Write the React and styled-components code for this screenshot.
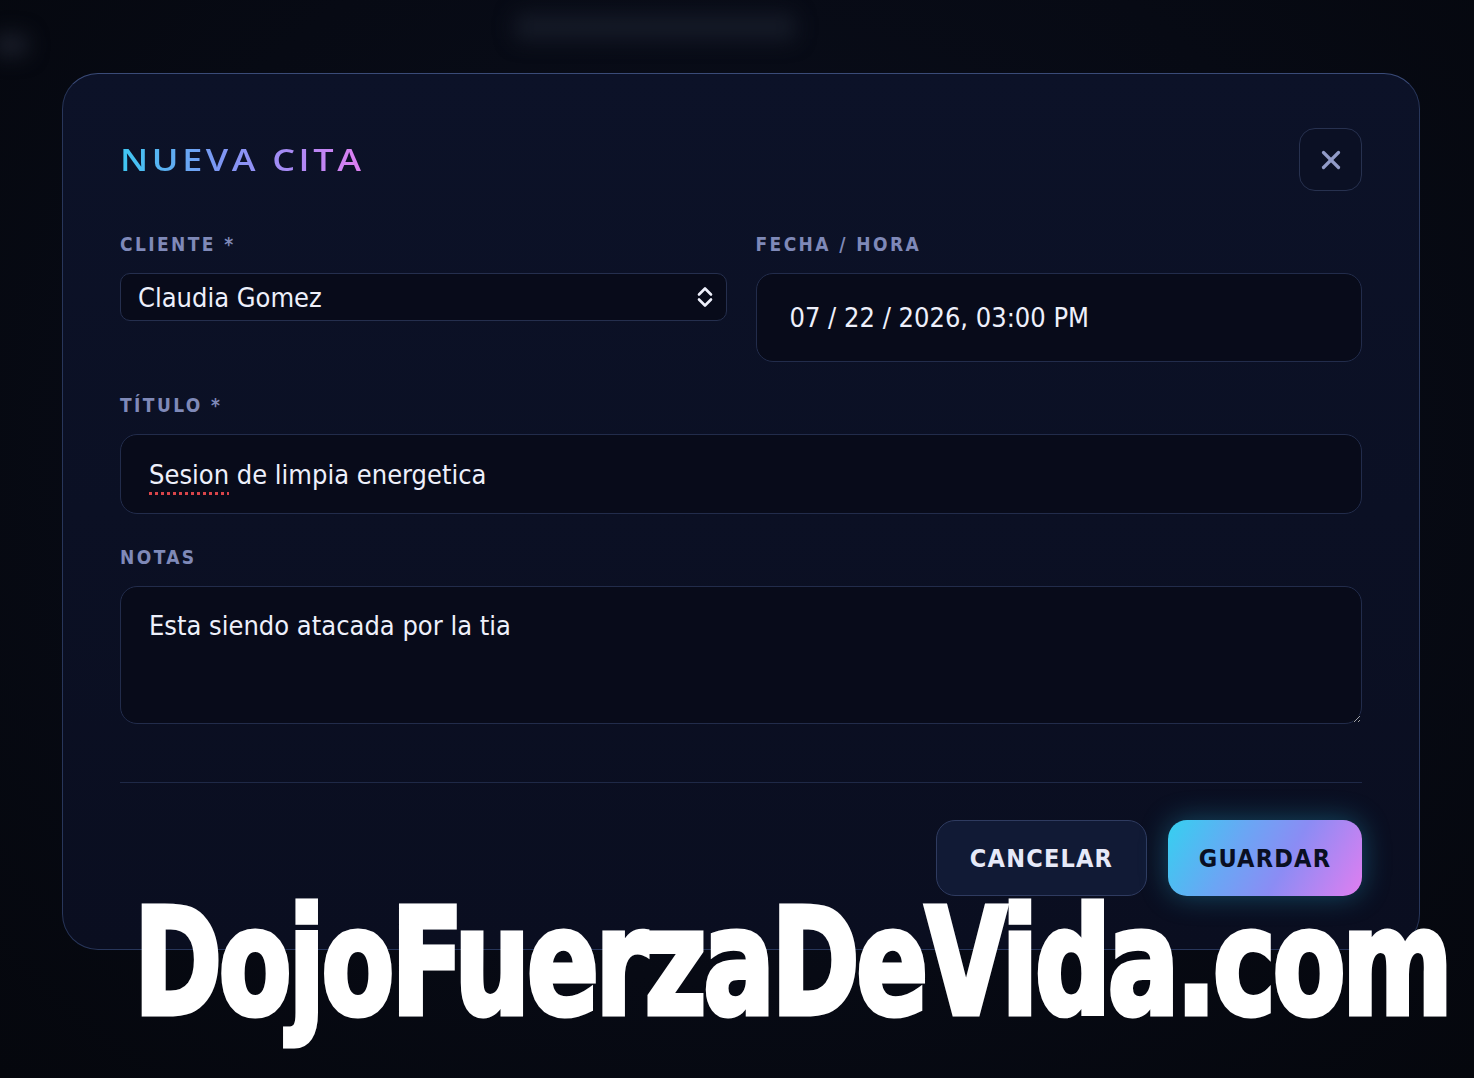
import styled, { createGlobalStyle } from 'styled-components'
import { X } from 'lucide-react'

const GlobalStyle = createGlobalStyle`
    html, body {
        margin: 0;
        padding: 0;
        background: #05070d;
    }
    body {
        font-family: 'DejaVu Sans Condensed', 'DejaVu Sans', sans-serif;
        font-stretch: condensed;
        color: #eef0fb;
    }
`

function UpDownIcon() {
    return (
        <svg width="18" height="26" viewBox="0 0 18 26" fill="none">
            <path
                d="M3 10.5 L9 4.5 L15 10.5"
                stroke="currentColor"
                strokeWidth="2.6"
                strokeLinecap="round"
                strokeLinejoin="round"
            />
            <path
                d="M3 15.5 L9 21.5 L15 15.5"
                stroke="currentColor"
                strokeWidth="2.6"
                strokeLinecap="round"
                strokeLinejoin="round"
            />
        </svg>
    )
}

export default function App() {
    return (
        <Page>
            <GlobalStyle />
            <Backdrop>
                <BlurBlob />
                <BlurTitle />
            </Backdrop>

            <Modal>
                <Header>
                    <Title>NUEVA CITA</Title>
                    <CloseButton aria-label="Cerrar">
                        <X size={30} strokeWidth={2.6} />
                    </CloseButton>
                </Header>

                <Form>
                    <Row>
                        <Field>
                            <Label>CLIENTE *</Label>
                            <SelectBox>
                                <span>Claudia Gomez</span>
                                <UpDownIcon />
                            </SelectBox>
                        </Field>
                        <Field>
                            <Label>FECHA / HORA</Label>
                            <InputBox $height={89}>
                                07 / 22 / 2026, 03:00 PM
                            </InputBox>
                        </Field>
                    </Row>

                    <Field>
                        <Label>TÍTULO *</Label>
                        <InputBox $height={80} $pad={28}>
                            <Misspelled>Sesion</Misspelled>&nbsp;de limpia energetica
                        </InputBox>
                    </Field>

                    <Field>
                        <Label>NOTAS</Label>
                        <NotesArea
                            defaultValue="Esta siendo atacada por la tia"
                            readOnly
                        />
                    </Field>
                </Form>

                <Divider />

                <Footer>
                    <CancelButton>CANCELAR</CancelButton>
                    <SaveButton>GUARDAR</SaveButton>
                </Footer>
            </Modal>

            <Watermark>DojoFuerzaDeVida.com</Watermark>
        </Page>
    )
}

const Page = styled.div`
    position: relative;
    width: 1474px;
    height: 1078px;
    overflow: hidden;
    background: radial-gradient(
            ellipse at 50% 40%,
            #0a0e1c 0%,
            #070a14 60%,
            #05070d 100%
        );
    padding-top: 73px;
    box-sizing: border-box;
`

const Backdrop = styled.div`
    position: absolute;
    inset: 0;
    pointer-events: none;
    filter: blur(10px);
`

const BlurBlob = styled.div`
    position: absolute;
    left: -6px;
    top: 34px;
    width: 34px;
    height: 22px;
    border-radius: 8px;
    background: #1a1e2a;
`

const BlurTitle = styled.div`
    position: absolute;
    left: 515px;
    top: 14px;
    width: 280px;
    height: 26px;
    border-radius: 6px;
    background: #151a27;
`

const Modal = styled.div`
    position: relative;
    width: 1358px;
    margin-left: 62px;
    box-sizing: border-box;
    padding: 54px 57px 53px 57px;
    border-radius: 36px;
    border: 1.5px solid #28365a;
    border-top-color: #3a4b78;
    background: linear-gradient(180deg, #0c1228 0%, #0a0e20 100%);
`

const Header = styled.div`
    display: flex;
    align-items: center;
    justify-content: space-between;
    margin-bottom: 40px;
`

const Title = styled.h2`
    margin: 0;
    font-family: 'Open Sans', 'DejaVu Sans', sans-serif;
    font-stretch: normal;
    font-weight: 600;
    font-size: 30px;
    letter-spacing: 3px;
    background: linear-gradient(90deg, #3ec7f2 0%, #7c97f3 40%, #a98af5 70%, #e07ef0 100%);
    -webkit-background-clip: text;
    background-clip: text;
    color: transparent;
    transform-origin: left center;
    transform: scaleX(1.2);
`

const CloseButton = styled.button`
    width: 63px;
    height: 63px;
    display: flex;
    align-items: center;
    justify-content: center;
    border-radius: 16px;
    border: 1.5px solid #27314f;
    background: #0b1024;
    color: #929bc8;
    padding: 0;
`

const Form = styled.div`
    display: flex;
    flex-direction: column;
    gap: 30px;
`

const Row = styled.div`
    display: grid;
    grid-template-columns: 1fr 1fr;
    column-gap: 29px;
    align-items: start;
`

const Field = styled.div`
    display: flex;
    flex-direction: column;
`

const Label = styled.label`
    font-weight: 700;
    font-size: 19px;
    line-height: 26px;
    letter-spacing: 2.4px;
    color: #7f89b8;
    margin-bottom: 16px;
`

const SelectBox = styled.div`
    height: 48px;
    box-sizing: border-box;
    display: flex;
    align-items: center;
    justify-content: space-between;
    padding: 0 12px 0 17px;
    border: 1.5px solid #252f4e;
    border-radius: 10px;
    background: #080b1a;
    font-size: 27px;
    color: #eef0fb;
`

const InputBox = styled.div`
    height: ${(p) => p.$height}px;
    box-sizing: border-box;
    display: flex;
    align-items: center;
    padding: 0 ${(p) => p.$pad || 33}px;
    border: 1.5px solid #222c4b;
    border-radius: 17px;
    background: #080b1a;
    font-size: 27px;
    color: #eef0fb;
    white-space: pre;
`

const Misspelled = styled.span`
    text-decoration: underline dotted #d9454a;
    text-decoration-thickness: 3px;
    text-underline-offset: 8px;
`

const NotesArea = styled.textarea`
    height: 138px;
    box-sizing: border-box;
    padding: 22px 28px;
    border: 1.5px solid #222c4b;
    border-radius: 17px;
    background: #080b1a;
    font-family: 'DejaVu Sans Condensed', 'DejaVu Sans', sans-serif;
    font-stretch: condensed;
    font-size: 27px;
    line-height: 34px;
    color: #eef0fb;
    outline: none;
    resize: vertical;
`

const Divider = styled.hr`
    margin: 58px 0 37px 0;
    border: none;
    border-top: 1.5px solid #1f2947;
`

const Footer = styled.div`
    display: flex;
    justify-content: flex-end;
    gap: 21px;
`

const BaseButton = styled.button`
    height: 76px;
    border-radius: 19px;
    font-family: 'DejaVu Sans Condensed', 'DejaVu Sans', sans-serif;
    font-stretch: condensed;
    font-weight: 700;
    font-size: 25px;
    letter-spacing: 1.2px;
`

const CancelButton = styled(BaseButton)`
    width: 211px;
    border: 1.5px solid #2f3b60;
    background: #111a35;
    color: #e6e9f8;
`

const SaveButton = styled(BaseButton)`
    width: 194px;
    border: none;
    color: #0a0f22;
    background: linear-gradient(120deg, #35d0f0 0%, #6aa6f4 35%, #8b8cf4 60%, #e07ef0 100%);
    box-shadow: 0 0 28px rgba(40, 190, 230, 0.35);
`

const Watermark = styled.div`
    position: absolute;
    left: 134px;
    top: 889px;
    font-family: 'DejaVu Sans Condensed', 'DejaVu Sans', sans-serif;
    font-stretch: condensed;
    font-weight: 700;
    font-size: 148px;
    line-height: 1;
    letter-spacing: -4px;
    color: #ffffff;
    -webkit-text-stroke: 5px #ffffff;
    white-space: nowrap;
    transform-origin: left top;
    transform: scaleX(0.796);
`
